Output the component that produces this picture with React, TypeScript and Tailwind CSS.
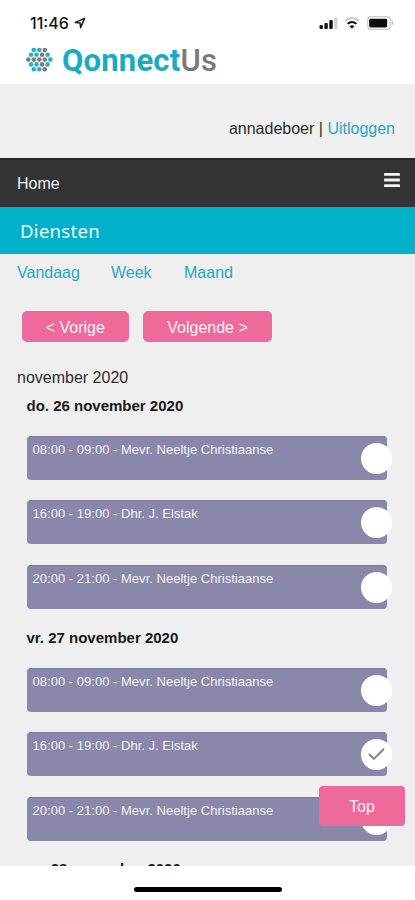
import { Check } from "lucide-react";

type Shift = {
  time: string;
  client: string;
  done?: boolean;
};

type Day = {
  label: string;
  shifts: Shift[];
};

const days: Day[] = [
  {
    label: "do. 26 november 2020",
    shifts: [
      { time: "08:00 - 09:00", client: "Mevr. Neeltje Christiaanse" },
      { time: "16:00 - 19:00", client: "Dhr. J. Elstak" },
      { time: "20:00 - 21:00", client: "Mevr. Neeltje Christiaanse" },
    ],
  },
  {
    label: "vr. 27 november 2020",
    shifts: [
      { time: "08:00 - 09:00", client: "Mevr. Neeltje Christiaanse" },
      { time: "16:00 - 19:00", client: "Dhr. J. Elstak", done: true },
      { time: "20:00 - 21:00", client: "Mevr. Neeltje Christiaanse" },
    ],
  },
  { label: "za. 28 november 2020", shifts: [] },
];

// c = cyan dot, g = gray dot
const logoRows = ["ccg", "ccgc", "ggggc", "ccgc", "ccg"];

function LogoMark() {
  return (
    <svg className="w-7 h-6" viewBox="0 0 28 24">
      {logoRows.map((row, y) =>
        row.split("").map((dot, x) => (
          <circle
            key={`${y}-${x}`}
            cx={14.3 + (x - (row.length - 1) / 2) * 5.5}
            cy={11.6 + (y - 2) * 4.8}
            r={2.3}
            fill={dot === "c" ? "#27b0c6" : "#85797b"}
          />
        )),
      )}
    </svg>
  );
}

function StatusBar() {
  return (
    <div className="h-[42px] pt-[13px] pl-[30px] pr-[21px] flex items-start justify-between">
      <div className="flex items-center h-5">
        <span className="font-['Inter',sans-serif] font-medium text-[16px] leading-5 text-[#161616]">
          11:46
        </span>
        <svg className="w-3 h-3 ml-[5px]" viewBox="0 0 12 12" fill="none">
          <path
            d="M1.2 5.6 10.6 1.4 6.6 10.6 6.1 6Z"
            stroke="#1b1b1b"
            strokeWidth="1.5"
            strokeLinejoin="round"
          />
        </svg>
      </div>

      <div className="flex items-center h-5">
        <svg className="w-[19px] h-3" viewBox="0 0 19 12">
          <rect x="0.5" y="8" width="3.4" height="4" rx="1" fill="#111" />
          <rect x="5.4" y="6" width="3.4" height="6" rx="1" fill="#111" />
          <rect x="10.3" y="3" width="3.4" height="9" rx="1" fill="#111" />
          <rect x="15.2" y="0.5" width="3.2" height="11.5" rx="1" fill="#d2d2d2" />
        </svg>
        <svg className="w-4 h-3 ml-[6px]" viewBox="0 0 16 12" fill="none">
          <path d="M1.2 4.2C5 .2 11 .2 14.8 4.2" stroke="#c4c4c4" strokeWidth="1.8" />
          <path d="M3.6 6.9C6.1 4.3 9.9 4.3 12.4 6.9" stroke="#111" strokeWidth="2" />
          <path d="M5.6 9.2C7 7.8 9 7.8 10.4 9.2L8 11.8Z" fill="#111" />
        </svg>
        <svg className="w-[27px] h-[14px] ml-[7px]" viewBox="0 0 27 14" fill="none">
          <rect x="0.7" y="0.7" width="22.6" height="12.6" rx="3.4" stroke="#c9c9c9" strokeWidth="1.2" />
          <rect x="2.2" y="2.8" width="18" height="8.6" rx="1.4" fill="#0b0b0b" />
          <path d="M24.6 4.6C26.6 5.4 26.6 8.6 24.6 9.4Z" fill="#b9b9b9" />
        </svg>
      </div>
    </div>
  );
}

function ShiftCard({ shift }: { shift: Shift }) {
  return (
    <div className="h-11 w-[360.5px] rounded-[4px] bg-[#8987aa] border-t border-[#7b799e] pl-[6px] pt-[5px] flex justify-between items-start">
      <p className="text-[13px] leading-4 tracking-[0.02px] text-[#f4f3fa]">
        {shift.time} - {shift.client}
      </p>
      <div className="w-[31px] h-[31px] mt-[1px] -mr-[5px] shrink-0 rounded-full bg-white flex items-center justify-center">
        {shift.done && <Check className="w-[21px] h-[21px] text-[#858585]" strokeWidth={2.2} />}
      </div>
    </div>
  );
}

export default function App() {
  return (
    <div className="relative w-[415px] h-[900px] overflow-hidden bg-white flex flex-col font-['Liberation_Sans',Arial,sans-serif] text-[#2c2c2c]">
      <header className="h-[84px] shrink-0">
        <StatusBar />
        <div className="flex items-center h-9 pl-[25px]">
          <LogoMark />
          <span className="ml-[9px] mt-[2px] font-['Roboto',sans-serif] text-[31px] leading-9 font-bold tracking-[0.2px] text-[#17abc4]">
            Qonnect<span className="font-medium text-[#7d797a]">Us</span>
          </span>
        </div>
      </header>

      <div className="h-[74px] shrink-0 bg-[#efefef] pt-[34px] pr-5 text-right text-[16px] leading-[22px]">
        annadeboer | <a className="text-[#26a9c3]">Uitloggen</a>
      </div>

      <nav className="h-[49px] shrink-0 bg-[#333] border-t-2 border-[#272727] pl-[17px] pr-[15px] flex items-center justify-between">
        <span className="text-[16px] text-[#f5f5f5]">Home</span>
        <svg className="w-4 h-[14px] mb-[7px]" viewBox="0 0 16 14" fill="#f1f1f1">
          <rect width="16" height="2.8" rx="0.6" />
          <rect y="5.6" width="16" height="2.8" rx="0.6" />
          <rect y="11.2" width="16" height="2.8" rx="0.6" />
        </svg>
      </nav>

      <h1 className="h-[47px] shrink-0 bg-[#02b0ca] pl-5 pt-px flex items-center font-['Noto_Sans',sans-serif] text-[18.5px] tracking-[0.3px] text-[#eefbfd]">
        Diensten
      </h1>

      <main className="h-[612px] shrink-0 overflow-hidden bg-[#efefef]">
        <div className="flex pl-[17px] pt-[9px] text-[16px] leading-5 text-[#26a9c3]">
          <a className="w-[94px]">Vandaag</a>
          <a className="w-[73px]">Week</a>
          <a>Maand</a>
        </div>

        <div className="flex gap-[14px] pl-[21.5px] pt-[28px]">
          <button className="w-[107.5px] h-[31px] rounded-[5px] bg-[#ee6a9a] pt-[2px] text-[16px] text-[#fdf0f5]">
            &lt; Vorige
          </button>
          <button className="w-[129px] h-[31px] rounded-[5px] bg-[#ee6a9a] pt-[2px] text-[16px] text-[#fdf0f5]">
            Volgende &gt;
          </button>
        </div>

        <p className="pl-[17px] pt-[25px] text-[16px] leading-[22px]">november 2020</p>

        {days.map((day) => (
          <section key={day.label} className="pl-[26.5px] pt-[7px] last:pt-[6px]">
            <h2 className="mb-5 text-[15px] leading-5 font-bold text-[#181818]">{day.label}</h2>
            <div className="flex flex-col gap-[20.3px] mb-[12.5px]">
              {day.shifts.map((shift) => (
                <ShiftCard key={shift.time} shift={shift} />
              ))}
            </div>
          </section>
        ))}
      </main>

      <footer className="flex-1 flex justify-center pt-[21px]">
        <div className="w-[148px] h-[5px] rounded-full bg-black" />
      </footer>

      <button className="absolute left-[319px] top-[786px] w-[86px] h-10 rounded-[4px] bg-[#ee6a9a] pt-[2px] text-[16px] text-[#fdf0f5]">
        Top
      </button>
    </div>
  );
}
